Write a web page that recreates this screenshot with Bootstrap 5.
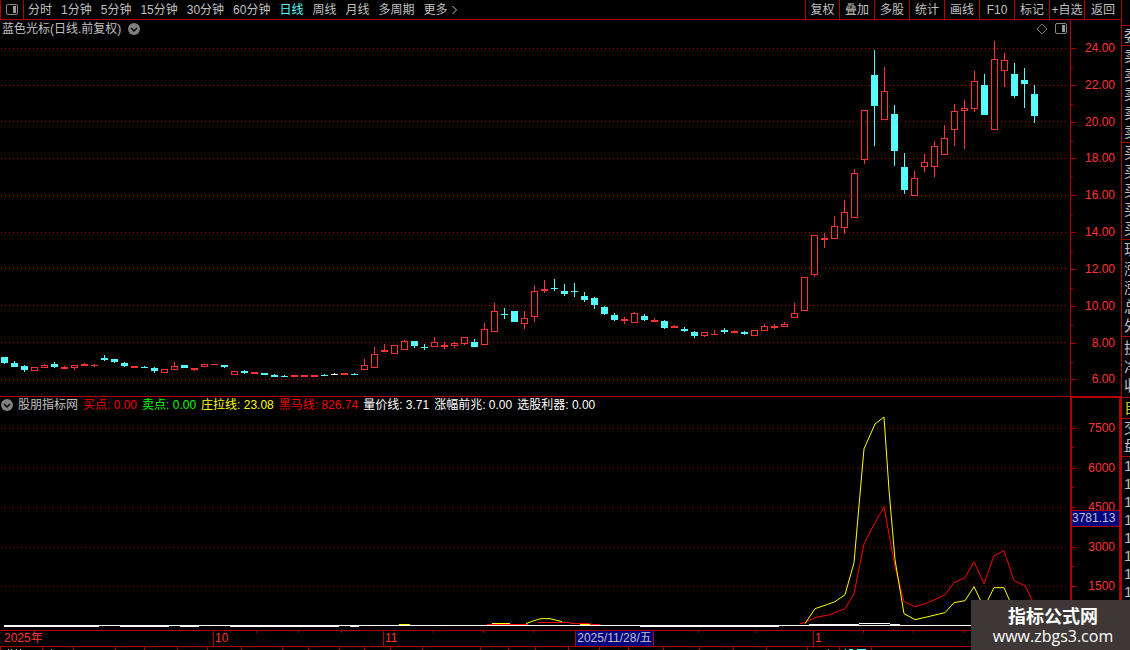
<!DOCTYPE html>
<html lang="zh-CN" data-bs-theme="dark">
<head>
<meta charset="utf-8">
<meta name="viewport" content="width=device-width, initial-scale=1">
<title>蓝色光标 日线</title>
<link href="https://cdn.jsdelivr.net/npm/bootstrap@5.3.0/dist/css/bootstrap.min.css" rel="stylesheet">
<style>
:root { --line: #b00000; --up: #ff3232; --down: #54fcfc; --ink: #c0c0c0; }
body { background: #000; color: var(--ink); font: 12px/14px "Liberation Sans", "Noto Sans CJK SC", sans-serif; }
button { background: none; border: 0; padding: 0; color: inherit; font: inherit; white-space: nowrap; }
svg { display: block; }
.topbar { height: 20px; border-bottom: 1px solid var(--line); }
.panel-toggle { width: 24px; border: solid var(--line); border-width: 0 1px; }
.periods { gap: 9px; padding-left: 4px; }
.periods .current { color: var(--down); }
.tools button { width: 35px; border-left: 1px solid var(--line); }
.tools button:first-child { width: 34px; }
.tools button:last-child { width: 37px; }
.pane { flex-basis: 0; min-height: 0; }
.price-pane { flex-grow: 377; border-bottom: 1px solid var(--line); }
.study-pane { flex-grow: 233; }
.plot > svg { width: 100%; height: 100%; shape-rendering: crispEdges; }
.plot { min-width: 0; }
.scale { width: 51px; color: var(--up); border-left: 1px solid var(--line); text-align: right; padding-right: 6px; }
.price-scale { padding-top: 21px; padding-bottom: 10px; }
.study-scale { padding-top: 23px; padding-bottom: 37px; padding-right: 4px; border: 2px solid var(--line); border-width: 1px 2px 0; }
.scale div { position: relative; }
.scale .price::before { content: ""; position: absolute; left: 0; top: 7px; width: 5px; border-top: 1px solid var(--line); }
.scale .price:not(:nth-last-child(1 of .price))::after { content: ""; position: absolute; left: 0; top: 26px; width: 2px; border-top: 1px solid var(--line); }
.marker { position: absolute !important; left: 0; right: 0; top: 112px; height: 17px; line-height: 15px; background: #000080; color: var(--ink); border: solid var(--line); border-width: 1px 0; padding-right: 4px; z-index: 1; }
.caption-line { position: absolute; left: 2px; top: 2px; gap: 7px; white-space: nowrap; }
.study-line { top: 1px; left: 1px; gap: 5px; }
.corner { position: absolute; right: 3px; top: 3px; gap: 7px; }
.dates { height: 17px; border: solid var(--line); border-width: 1px 0; color: var(--up); line-height: 15px; }
.dates .month { border-left: 1px solid var(--line); padding-left: 1px; }
.dates .first { width: 213px; padding-left: 4px; }
.dates .oct { width: 170px; }
.dates .nov { width: 430px; }
.cursor-date { position: absolute; left: 575px; top: 0; width: 79px; text-align: center; background: #000080; color: var(--ink); border: solid var(--line); border-width: 0 1px; }
.strip { height: 3px; }
.quote { width: 9px; border-left: 1px solid var(--line); font-size: 15px; line-height: 19px; }
.quote div { border-bottom: 1px solid var(--line); padding-left: 2px; white-space: nowrap; flex: none; }
.quote .gap-row { height: 26px; }
.quote .one { height: 20px; }
.quote .five { height: 97px; }
.quote .three { height: 61px; padding-top: 1px; }
.quote .tab-row { height: 21px; color: #d0d000; line-height: 20px; }
.quote .two { height: 38px; line-height: 18px; }
.quote .ticks { border: 0; line-height: 18px; }
.stamp { position: absolute; right: 0; bottom: 0; width: 159px; height: 50px; background: #3d3737; color: #fff; text-align: center; padding-left: 5px; }
.stamp strong { font: bold 18px/20px "Noto Sans CJK SC", sans-serif; margin-top: 5px; }
.stamp span { font: 16px/20px "Open Sans", sans-serif; margin-top: 1px; }
</style>
</head>
<body>
<div class="d-flex vh-100 overflow-hidden position-relative">
  <main class="d-flex flex-column flex-grow-1 overflow-hidden">
    <header class="topbar d-flex flex-shrink-0">
      <button class="panel-toggle d-flex align-items-center justify-content-center" aria-label="面板">
        <svg width="12" height="12" viewBox="0 0 12 12"><rect x=".5" y=".5" width="11" height="10" rx="1.5" fill="none" stroke="#888"/><path d="M7 2h3v7H7z" fill="#999"/></svg>
      </button>
      <nav class="periods d-flex flex-grow-1" aria-label="周期">
        <button>分时</button><button>1分钟</button><button>5分钟</button><button>15分钟</button><button>30分钟</button><button>60分钟</button><button class="current">日线</button><button>周线</button><button>月线</button><button>多周期</button>
        <button class="d-flex align-items-center">更多<svg class="ms-1" width="6" height="10" viewBox="0 0 6 10"><path d="M.5 1l4 4-4 4" fill="none" stroke="#c0c0c0"/></svg></button>
      </nav>
      <div class="tools d-flex"><button>复权</button><button>叠加</button><button>多股</button><button>统计</button><button>画线</button><button>F10</button><button>标记</button><button>+自选</button><button>返回</button></div>
    </header>

    <section class="pane price-pane d-flex">
      <div class="plot position-relative flex-grow-1">
        <svg id="candles" viewBox="0 20 1070 376" preserveAspectRatio="none" role="img" aria-label="日线K线图"></svg>
        <div class="caption-line d-flex align-items-center"><span>蓝色光标(日线.前复权)</span>
          <button aria-label="展开"><svg width="12" height="12" viewBox="0 0 12 12"><circle cx="6" cy="6" r="6" fill="#808080"/><path d="M3 5l3 3 3-3" fill="none" stroke="#000" stroke-width="1.4"/></svg></button>
        </div>
        <div class="corner d-flex align-items-center">
          <svg width="12" height="12" viewBox="0 0 12 12"><path d="M6 1l5 5-5 5-5-5z" fill="none" stroke="#777"/></svg>
          <svg width="12" height="12" viewBox="0 0 12 12"><rect x=".5" y=".5" width="11" height="10" rx="1.5" fill="none" stroke="#888"/><path d="M7 2h3v7H7z" fill="#999"/></svg>
        </div>
      </div>
      <div class="scale price-scale d-flex flex-column justify-content-between">
        <div class="price">24.00</div><div class="price">22.00</div><div class="price">20.00</div><div class="price">18.00</div><div class="price">16.00</div><div class="price">14.00</div><div class="price">12.00</div><div class="price">10.00</div><div class="price">8.00</div><div class="price">6.00</div>
      </div>
    </section>

    <section class="pane study-pane d-flex">
      <div class="plot position-relative flex-grow-1">
        <svg id="study" viewBox="0 397 1070 233" preserveAspectRatio="none" role="img" aria-label="指标曲线"></svg>
        <div class="caption-line study-line d-flex align-items-center">
          <button aria-label="指标菜单"><svg width="12" height="12" viewBox="0 0 12 12"><circle cx="6" cy="6" r="6" fill="#808080"/><path d="M3 5l3 3 3-3" fill="none" stroke="#000" stroke-width="1.4"/></svg></button>
          <span>股朋指标网</span><span style="color:#f00000">买点: 0.00</span><span style="color:#00ff00">卖点: 0.00</span><span style="color:#ffff00">庄拉线: 23.08</span><span style="color:#f00000">黑马线: 826.74</span><span class="text-white">量价线: 3.71</span><span class="text-white">涨幅前兆: 0.00</span><span class="text-white">选股利器: 0.00</span>
        </div>
      </div>
      <div class="scale study-scale position-relative d-flex flex-column justify-content-between">
        <div class="price">7500</div><div class="price">6000</div><div class="price">4500</div><div class="price">3000</div><div class="price">1500</div>
        <div class="marker">3781.13</div>
      </div>
    </section>

    <div class="dates d-flex flex-shrink-0 position-relative">
      <div class="first">2025年</div><div class="month oct">10</div><div class="month nov">11</div><div class="month flex-grow-1">1</div>
      <svg id="dateTicks" class="position-absolute top-0 start-0" width="970" height="2" shape-rendering="crispEdges"></svg>
      <div class="cursor-date">2025/11/28/五</div>
    </div>
    <svg id="strip" class="strip w-100 flex-shrink-0" shape-rendering="crispEdges"></svg>
  </main>

  <aside class="quote d-flex flex-column overflow-hidden flex-shrink-0">
    <div class="gap-row"></div>
    <div class="one">委</div>
    <div class="five">卖<br>卖<br>卖<br>卖<br>卖</div>
    <div class="five">买<br>买<br>买<br>买<br>买</div>
    <div class="five">现<br>涨<br>涨<br>总<br>外</div>
    <div class="three">换<br>净<br>收</div>
    <div class="tab-row">自</div>
    <div class="two">交<br>盘</div>
    <div class="ticks">1<br>1<br>1<br>1<br>1<br>1<br>1<br>1</div>
  </aside>

  <div class="stamp d-flex flex-column"><strong>指标公式网</strong><span>www.zbgs3.com</span></div>
</div>

<script src="https://cdn.jsdelivr.net/npm/bootstrap@5.3.0/dist/js/bootstrap.bundle.min.js"></script>
<script>
const LINE = '#b00000', UP = '#ff3232', DOWN = '#54fcfc';
const rect = (x, y, w, h, c) => `<rect x="${x}" y="${y}" width="${w}" height="${h}" fill="${c}"/>`;
const grid = ys => ys.map(y => `<path d="M1 ${y + .5}H1067" stroke="${LINE}" stroke-dasharray="1 3"/>`).join('');

// One day per entry: kind (u rise, d fall, w flat), high, body top, body bottom, low
const days = `d357,357,363,364 d361,363,367,367 d365,366,370,372 u367,367,371,371 u364,365,368,368 d362,364,367,368 u366,367,369,369 u365,365,368,370 u363,364,366,366 u364,365,366,367
d355,358,360,361 d359,359,362,363 d362,363,366,367 u366,366,368,368 d366,367,368,368 d367,368,371,373 u369,369,373,373 u362,366,370,370 d365,365,368,368 u368,368,370,371
u364,364,367,367 u364,364,365,365 d365,365,367,368 u371,371,375,375 d370,371,373,374 u372,372,374,374 d373,373,375,375 d374,375,377,377 d375,376,377,377 u375,375,377,377
u375,375,377,377 u375,375,377,377 d374,375,376,376 w373,374,375,375 u373,373,375,375 d373,374,375,375 u359,365,370,370 u347,354,368,368 u344,350,352,352 u345,345,354,354
u340,341,350,350 d341,341,346,348 d344,347,348,350 u337,342,347,347 u342,345,347,349 u342,343,346,348 u337,337,344,345 d339,342,347,347 u323,329,345,345 u303,311,332,332
d308,314,315,319 d311,311,322,322 u311,318,324,329 u285,291,317,322 u280,289,291,293 d279,288,289,291 d284,291,294,296 d283,291,292,297 d292,296,300,302 d297,298,305,309
d306,307,314,315 d313,315,320,321 u317,319,321,324 u312,313,323,323 d314,316,320,321 u318,320,322,322 d320,321,328,329 u325,326,328,328 d327,329,331,332 d331,332,336,338
u332,332,336,337 u330,334,335,335 d328,330,332,334 u330,331,333,333 d331,332,334,335 u330,330,336,336 u324,326,331,331 u324,326,328,329 u322,324,327,327 u303,313,318,318
u277,277,311,311 u235,235,275,277 u233,238,240,248 u216,226,239,239 u200,212,228,234 u169,173,218,218 u110,110,160,164 d50,75,106,146 u67,91,120,120 d105,114,151,166
d153,167,190,194 u171,178,196,196 u154,162,167,172 u141,146,167,177 u125,138,155,155 u104,111,130,146 u100,108,111,149 u71,81,109,112 d74,85,115,115 u41,59,130,130
u53,60,71,87 d63,74,96,98 d68,80,84,108 d85,94,116,123`.split(/\s+/);

let out = grid([48, 85, 121, 158, 195, 232, 268, 305, 342, 379]);
days.forEach((day, i) => {
  const [hi, top, bot, lo] = day.slice(1).split(',').map(Number);
  const color = { u: UP, d: DOWN, w: '#fff' }[day[0]], x = 4 + 10 * i;
  if (hi < top) out += rect(x, hi, 1, top - hi, color);
  if (lo > bot) out += rect(x, bot, 1, lo - bot, color);
  if (day[0] === 'u' && bot - top > 2)
    out += `<rect x="${x - 2.5}" y="${top + .5}" width="6" height="${bot - top - 1}" fill="none" stroke="${UP}"/>`;
  else out += rect(x - 3, top, 7, bot - top, color);
});
document.getElementById('candles').innerHTML = out;

const curve = (pts, c) => `<polyline points="${pts}" fill="none" stroke="${c}"/>`;
out = grid([428, 468, 507, 547, 586]);
out += curve('800,624 805,623 815,618 830,615 845,609 854,594 864,544 875,523 884,507 895,567 904,602 915,607 925,604 935,600 945,595 954,583 965,578 974,562 984,584 994,556 1004,551 1014,581 1025,586 1032,600 1034,604', '#ff0000');
out += curve('805,624 815,609 824,606 835,602 845,595 854,563 864,449 875,424 884,417 889,490 895,560 904,614 915,620 924,618 945,613 954,603 965,601 974,587 984,608 994,588 1004,588 1014,611', '#ffff00');
// Low, nearly flat parts of the curves: x, y, width, colour
out += [[399,624,11,'#ff0'],[487,624,41,'#f00'],[492,623,18,'#ff0'],[538,622,32,'#f00'],[570,623,20,'#f00'],[580,624,10,'#ff0'],[590,624,10,'#f00'],
  [4,625,1066,'#fff'],[4,626,95,'#fff'],[120,626,49,'#fff'],[180,626,19,'#fff'],[230,626,109,'#fff'],[350,626,9,'#fff'],[640,626,139,'#fff'],
  [809,624,50,'#fff'],[859,623,31,'#fff'],[890,624,10,'#fff']].map(([x, y, w, c]) => rect(x, y, w, 1, c)).join('');
out += curve('526,624 534,621 541,619 550,619 562,622', '#ffff00');
document.getElementById('study').innerHTML = out;

document.getElementById('dateTicks').innerHTML = [256, 298, 341, 433, 483, 533, 698, 756, 863, 913, 963].map(x => rect(x, 0, 1, 2, LINE)).join('');
document.getElementById('strip').innerHTML =
  [0, 42, 73, 115, 144, 177, 207, 241, 282, 308, 339, 364, 390, 422, 480, 508, 535, 568, 599, 628, 663, 699, 733, 766, 807, 839, 871].map(x => rect(x, 0, 1, 3, LINE)).join('')
  + [8, 11, 16, 20, 51, 828].map(x => rect(x, 2, 1, 1, '#c0c0c0')).join('') + rect(845, 2, 1, 1, DOWN) + rect(849, 2, 4, 1, DOWN) + rect(857, 2, 9, 1, DOWN);
</script>
</body>
</html>
